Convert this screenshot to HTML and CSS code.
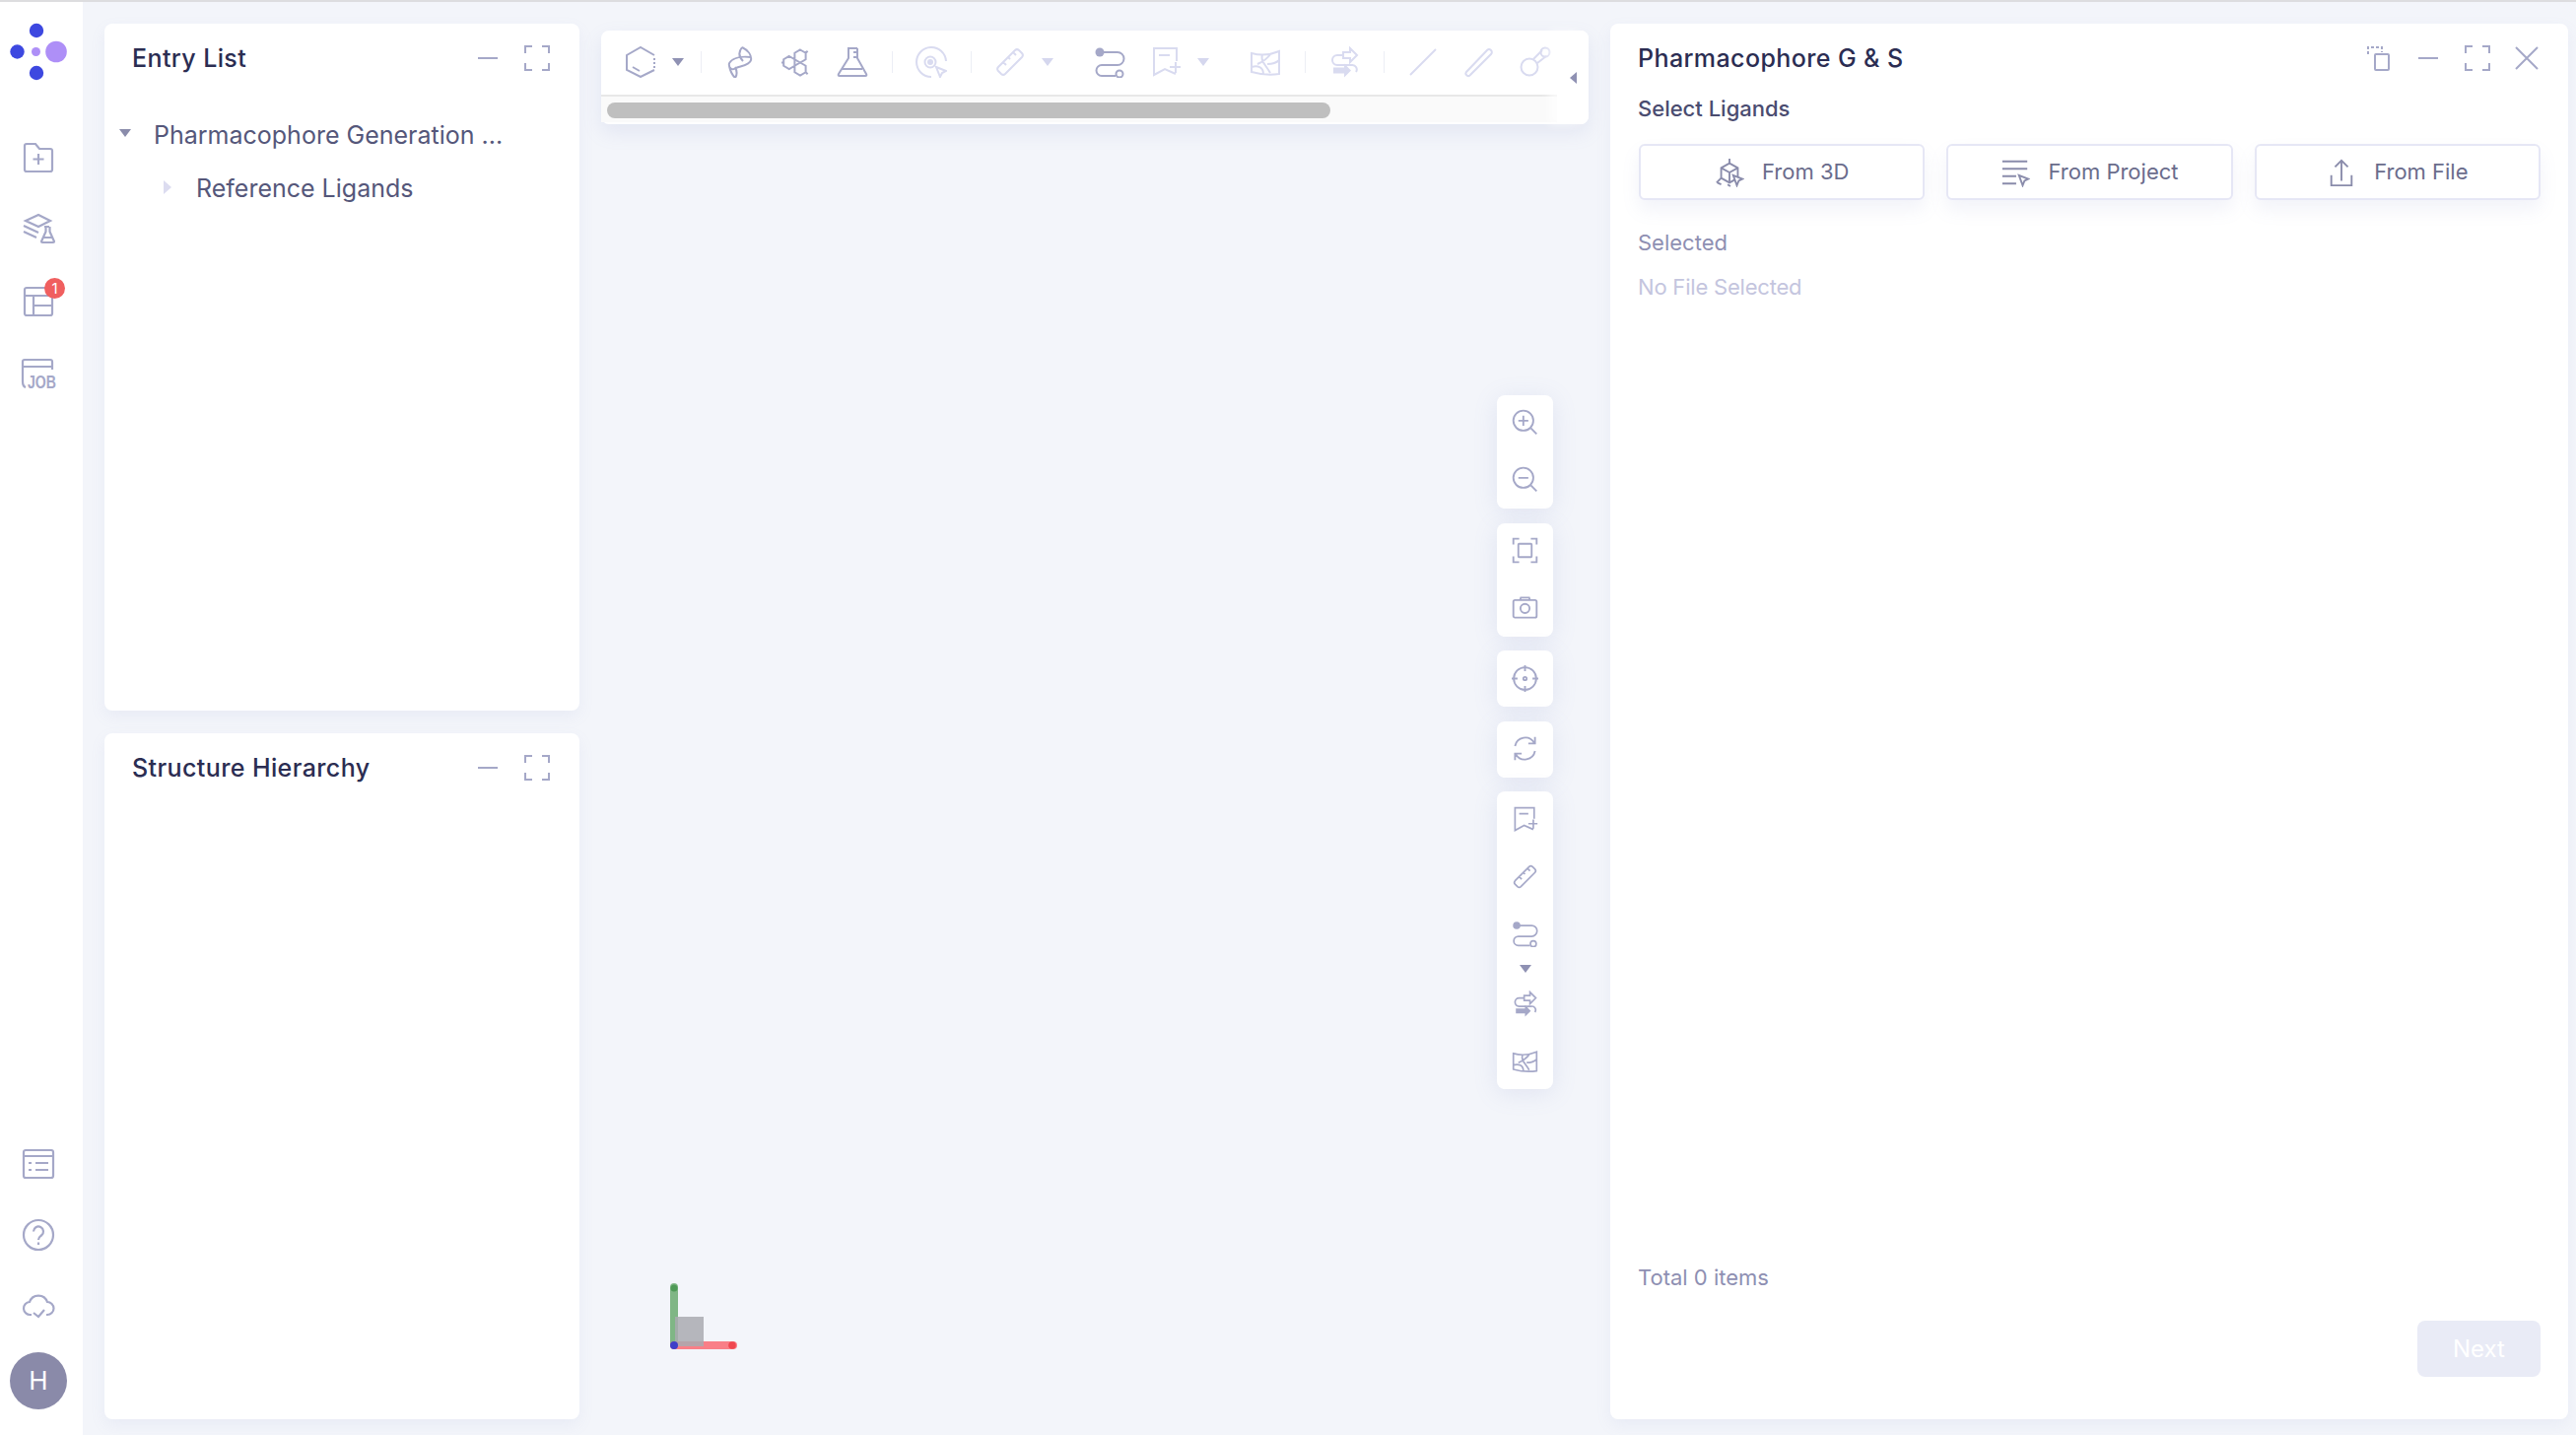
FILE: index.html
```html
<!DOCTYPE html>
<html lang="en">
<head>
  <meta charset="UTF-8">
  <title>Pharmacophore G &amp; S</title>
  <link rel="stylesheet" href="styles.css">
</head>
<body>
  <!-- shared icons -->
  <svg class="icon-defs" width="0" height="0">
    <defs>
      <symbol id="i-hex" viewBox="0 0 32 32"><path d="M30 9L16 1 2 9v15l14 7 14-7"/><path d="M30 12v2M30 16v2M30 20v2M8 21l7 4"/></symbol>
      <symbol id="i-dna" viewBox="0 0 32 32"><path d="M18 1c-4 5-3 10 1 14M18 1c6 3 10 8 9 13-1 5-10 6-15 8M5 17c4-6 14-7 22-6M5 17c-1 5 3 8 7 5M5 20c1 5 3 9 6 12 2-3 2-7 0-11"/></symbol>
      <symbol id="i-rings" viewBox="0 0 32 32"><path d="M20 3.5l5.6 3.25v6.5L20 16.500l-5.600-3.250v-6.500zM20 16.500l5.600 3.250v6.500L20 29.500l-5.600-3.250v-6.500zM8.800 10l5.600 3.250v6.500L8.800 23l-5.600-3.250v-6.500zM25.600 6.750l2-2M25.600 26.250l2 2M3.200 16.500H1"/></symbol>
      <symbol id="i-flask" viewBox="0 0 32 32"><path d="M11 2h10M12 2v10L2 28q-1 2 1 2h26q2 0 1-2L21 12V2M6 23h20M17 6h4M17 11h4"/></symbol>
      <symbol id="i-pick" viewBox="0 0 32 32"><path d="M31 15A15 15 0 1 0 16 31"/><circle cx="15" cy="16" r="3" class="solid"/><circle cx="15" cy="16" r="5.500" stroke-width="1"/><path d="M21 21l10 4-4 2-2 4z"/></symbol>
      <symbol id="i-ruler" viewBox="0 0 32 32"><path d="M4 21L21 4a3 3 0 0 1 4 0l3 3a3 3 0 0 1 0 4L11 28a3 3 0 0 1-4 0l-3-3a3 3 0 0 1 0-4zM9 16l3 3M14 11l2 2M19 6l3 3"/></symbol>
      <symbol id="i-path" viewBox="0 0 32 32"><circle cx="6" cy="6" r="4.500" class="solid"/><path d="M6 6h18a6.500 6.500 0 0 1 0 13H8a5.500 5.500 0 0 0 0 11h14"/><circle cx="26" cy="28" r="3.500"/></symbol>
      <symbol id="i-bookmark" viewBox="0 0 32 32"><path d="M27 15V2H4v27l11-6 11 5M9 9h11M20 21h11M26 16v11"/></symbol>
      <symbol id="i-map" viewBox="0 0 32 32"><path d="M2 7q14 4 28-2v23q-14 2-28-2zM13 8c-2 8 3 10 8 19M8 18c5-2 9-4 14-11M2 21c6-2 12 0 12 7M18 18c4 0 8 0 12-4"/></symbol>
      <symbol id="i-swap" viewBox="0 0 32 32"><path d="M15 6h7V2l7 7-7 7v-4h-7zM15 9H9a5 5 0 0 0 0 10h15a4.500 4.500 0 0 1 4 7"/><path class="solid" d="M5 21.500h11v-4l7 7-7 7v-4H5z"/></symbol>
      <symbol id="i-line" viewBox="0 0 32 32"><path d="M3 29L29 3"/></symbol>
      <symbol id="i-stick" viewBox="0 0 32 32"><path d="M3 26L24 4a2.500 2.500 0 0 1 4 4L7 29a2.500 2.500 0 0 1-4-3z"/></symbol>
      <symbol id="i-ball" viewBox="0 0 32 32"><circle cx="10" cy="21" r="8.500"/><circle cx="26" cy="6" r="4.500"/><path d="M14 13l9-9M18 17l9-7"/></symbol>
      <symbol id="i-minus" viewBox="0 0 26 26"><path d="M3 13h20"/></symbol>
      <symbol id="i-expand" viewBox="0 0 26 26"><path d="M1 8V1h7M18 1h7v7M25 18v7h-7M8 25H1v-7"/></symbol>
      <symbol id="i-close" viewBox="0 0 26 26"><path d="M2 2l22 22M24 2L2 24"/></symbol>
      <symbol id="i-copy" viewBox="0 0 26 26"><rect x="9" y="9" width="14" height="16" rx="1"/><path stroke-dasharray="3 2" d="M2 9V2h14v5"/></symbol>
    </defs>
  </svg>

  <div class="app">
    <nav class="sidebar">
      <svg class="logo" viewBox="0 2 84 100" width="84" height="100">
        <circle cx="37" cy="31" r="7.200" fill="#3d48e0"/>
        <circle cx="37" cy="74" r="7.200" fill="#3d48e0"/>
        <circle cx="17.500" cy="52.500" r="7.200" fill="#3d48e0"/>
        <circle cx="36.500" cy="52.500" r="4.500" fill="#ae8ff7"/>
        <circle cx="57" cy="52.500" r="10.800" fill="#ae8ff7"/>
      </svg>
      <div class="nav-group">
        <div class="nav-item">
          <svg class="icon" viewBox="0 0 32 32"><path d="M2 4q0-2 2-2h9l4 5h11q2 0 2 2v19q0 2-2 2H4q-2 0-2-2zM16 12v11M10.500 17.500h11"/></svg>
        </div>
        <div class="nav-item">
          <svg class="icon" viewBox="0 0 32 32"><path d="M3 7l13-6 12 6-12 6zM1 12l15 7M1 18l13 6M22 13h5M23.500 13v5L19 28q0 1 1 1h11q1 0 1-1l-4.500-10v-5M21 24h9"/></svg>
        </div>
        <div class="nav-item">
          <svg class="icon" viewBox="0 0 32 32"><rect x="2" y="2" width="28" height="28" rx="2"/><path d="M2 10h28M11 10v20M11 20h19"/></svg>
          <span class="badge">1</span>
        </div>
        <div class="nav-item">
          <svg class="icon icon-job" viewBox="0 0 36 32"><path d="M2 24V4q0-2 2-2h26q2 0 2 2v8M2 9h30M2 24q0 5 3 6"/><text x="7" y="31" textLength="29" lengthAdjust="spacingAndGlyphs" class="job-text">JOB</text></svg>
        </div>
      </div>
      <div class="nav-group nav-bottom">
        <div class="nav-item">
          <svg class="icon" viewBox="0 0 32 32"><rect x="1" y="2" width="30" height="28" rx="2"/><path d="M1 8h30M6 15h3M13 15h13M6 22h3M13 22h13"/></svg>
        </div>
        <div class="nav-item">
          <svg class="icon" viewBox="0 0 32 32"><circle cx="16" cy="16" r="15"/><path d="M11 12.500a5 5 0 1 1 8 4c-2 1.500-3 2-3 4.500M16 23.500v2.500"/></svg>
        </div>
        <div class="nav-item">
          <svg class="icon" viewBox="0 0 32 32"><path d="M9 25H8a6.500 6.500 0 0 1-1-13 9.500 9.500 0 0 1 18 0 6.500 6.500 0 0 1 0 13h-1M11 23l5 4 6-7"/></svg>
        </div>
        <div class="avatar">H</div>
      </div>
    </nav>

    <main class="workspace">
      <div class="left-col">
        <section class="panel">
          <header class="panel-head">
            <h2 class="panel-title">Entry List</h2>
            <div class="panel-actions">
              <svg class="head-icon"><use href="#i-minus"/></svg>
              <svg class="head-icon"><use href="#i-expand"/></svg>
            </div>
          </header>
          <ul class="tree">
            <li class="tree-row"><span class="arrow-down"></span>Pharmacophore Generation ...</li>
            <li class="tree-row tree-child"><span class="arrow-right"></span>Reference Ligands</li>
          </ul>
        </section>
        <section class="panel">
          <header class="panel-head">
            <h2 class="panel-title">Structure Hierarchy</h2>
            <div class="panel-actions">
              <svg class="head-icon"><use href="#i-minus"/></svg>
              <svg class="head-icon"><use href="#i-expand"/></svg>
            </div>
          </header>
        </section>
      </div>

      <div class="viewer">
        <div class="toolbar">
          <div class="toolbar-scroll">
            <div class="toolbar-row">
              <div class="tool-group">
                <svg class="tool"><use href="#i-hex"/></svg>
                <span class="caret"></span>
              </div>
              <span class="sep"></span>
              <div class="tool-group">
                <svg class="tool"><use href="#i-dna"/></svg>
                <svg class="tool"><use href="#i-rings"/></svg>
                <svg class="tool"><use href="#i-flask"/></svg>
              </div>
              <span class="sep"></span>
              <svg class="tool off"><use href="#i-pick"/></svg>
              <span class="sep"></span>
              <div class="tool-group">
                <svg class="tool off"><use href="#i-ruler"/></svg>
                <span class="caret off"></span>
                <svg class="tool"><use href="#i-path"/></svg>
                <svg class="tool off"><use href="#i-bookmark"/></svg>
                <span class="caret off"></span>
                <svg class="tool off"><use href="#i-map"/></svg>
              </div>
              <span class="sep"></span>
              <svg class="tool off"><use href="#i-swap"/></svg>
              <span class="sep"></span>
              <div class="tool-group">
                <svg class="tool off"><use href="#i-line"/></svg>
                <svg class="tool off"><use href="#i-stick"/></svg>
                <svg class="tool off"><use href="#i-ball"/></svg>
              </div>
            </div>
            <div class="scroll-track"><div class="scroll-thumb"></div></div>
          </div>
          <div class="toolbar-toggle"><span class="arrow-left"></span></div>
        </div>

        <div class="side-tools">
          <div class="tool-card">
            <div class="card-item"><svg class="card-icon" viewBox="0 0 32 32"><circle cx="14" cy="14" r="12"/><path d="M23 23l7 7M14 8v12M8 14h12"/></svg></div>
            <div class="card-item"><svg class="card-icon" viewBox="0 0 32 32"><circle cx="14" cy="14" r="12"/><path d="M23 23l7 7M8 14h12"/></svg></div>
          </div>
          <div class="tool-card">
            <div class="card-item"><svg class="card-icon" viewBox="0 0 32 32"><path d="M2 9V2h7M23 2h7v7M30 23v7h-7M9 30H2v-7"/><rect x="8" y="8" width="16" height="16" rx="1"/></svg></div>
            <div class="card-item"><svg class="card-icon" viewBox="0 0 32 32"><rect x="2" y="7" width="28" height="21" rx="2"/><circle cx="16" cy="17" r="5.500"/><path d="M10 7l1-3h10l1 3"/></svg></div>
          </div>
          <div class="tool-card">
            <div class="card-item"><svg class="card-icon" viewBox="0 0 32 32"><circle cx="16" cy="16" r="13.500"/><circle cx="16" cy="16" r="2"/><path d="M16 0v7M16 25v7M0 16h7M25 16h7"/></svg></div>
          </div>
          <div class="tool-card">
            <div class="card-item"><svg class="card-icon" viewBox="0 0 32 32"><path d="M4 13a12.500 12.500 0 0 1 23-4M28 19a12.500 12.500 0 0 1-23 4M28 2v8h-8M4 30v-8h8"/></svg></div>
          </div>
          <div class="tool-card">
            <div class="card-item"><svg class="card-icon"><use href="#i-bookmark"/></svg></div>
            <div class="card-item"><svg class="card-icon"><use href="#i-ruler"/></svg></div>
            <div class="card-item"><svg class="card-icon"><use href="#i-path"/></svg></div>
            <div class="card-caret"><span class="caret-plain"></span></div>
            <div class="card-item"><svg class="card-icon"><use href="#i-swap"/></svg></div>
            <div class="card-item"><svg class="card-icon"><use href="#i-map"/></svg></div>
          </div>
        </div>

        <svg class="axes" viewBox="0 0 84 76" width="84" height="76">
          <rect x="15" y="4" width="8" height="66" rx="4" fill="#7fb685"/>
          <rect x="15" y="63" width="68" height="8" rx="4" fill="#f97f87"/>
          <rect x="20" y="38" width="29" height="30" fill="#a9aab0" opacity=".85"/>
          <circle cx="19" cy="9" r="3.500" fill="#4f9a57"/>
          <circle cx="78" cy="67" r="3.800" fill="#f0474f"/>
          <circle cx="19" cy="67" r="4" fill="#3f3fc8"/>
        </svg>
      </div>

      <section class="panel panel-main">
        <header class="panel-head">
          <h2 class="panel-title">Pharmacophore G &amp; S</h2>
          <div class="panel-actions">
            <svg class="head-icon"><use href="#i-copy"/></svg>
            <svg class="head-icon"><use href="#i-minus"/></svg>
            <svg class="head-icon"><use href="#i-expand"/></svg>
            <svg class="head-icon"><use href="#i-close"/></svg>
          </div>
        </header>
        <h3 class="section-title">Select Ligands</h3>
        <div class="source-buttons">
          <button class="source-btn">
            <svg class="btn-icon" viewBox="0 0 32 32"><path d="M16 1v5M16 6l9 5v11l-9 5-9-5V11zM7 11l9 5 9-5M16 16v11M7 22l-5 5M3 27l4 2M14 29l3 2"/><path d="M20 19l10 4-4 2-2 5z" class="cursor"/></svg>
            From 3D
          </button>
          <button class="source-btn">
            <svg class="btn-icon" viewBox="0 0 32 32"><path d="M2 4h27M2 12h27M2 20h15M2 28h15"/><path d="M20 19l10 4-4 2-2 5z" class="cursor"/></svg>
            From Project
          </button>
          <button class="source-btn">
            <svg class="btn-icon" viewBox="0 0 32 32"><path d="M16 25V3M9 10l7-7 7 7M5 19v11h22V19"/></svg>
            From File
          </button>
        </div>
        <div class="selected-label">Selected</div>
        <div class="empty-label">No File Selected</div>
        <div class="panel-foot">
          <div class="total-label">Total 0 items</div>
          <div class="foot-actions"><button class="next-btn" disabled>Next</button></div>
        </div>
      </section>
    </main>
  </div>
</body>
</html>
```

FILE: styles.css
```css
* {
  box-sizing: border-box;
}

body {
  margin: 0;
  font-family: Inter, "Noto Sans", sans-serif;
  background: #f3f5fa;
}

.icon-defs {
  position: absolute;
}

symbol path, symbol circle, symbol rect {
  fill: none;
  stroke: currentColor;
  stroke-width: 2;
}

symbol .solid {
  fill: currentColor;
  stroke: none;
}

.app {
  display: flex;
  height: 1456px;
  border-top: 2px solid #dddddf;
  overflow: hidden;
}

/* left nav */
.sidebar {
  width: 84px;
  flex: none;
  background: #fff;
  display: flex;
  flex-direction: column;
  padding-bottom: 26px;
}

.logo {
  display: block;
}

.nav-group {
  margin-top: 21px;
}

.nav-bottom {
  margin-top: auto;
}

.nav-item {
  position: relative;
  height: 73px;
  padding-right: 6px;
  display: flex;
  align-items: center;
  justify-content: center;
}

.nav-bottom .nav-item {
  height: 72px;
}

.icon {
  width: 32px;
  height: 32px;
  fill: none;
  stroke: #a5a8c8;
  stroke-width: 2.2;
  overflow: visible;
}

.icon-job {
  width: 36px;
}

.job-text {
  font-family: "Liberation Sans", sans-serif;
  font-size: 18px;
  font-weight: 700;
  fill: #a5a8c8;
  stroke: none;
}

.badge {
  position: absolute;
  top: 13px;
  left: 45px;
  width: 21px;
  height: 21px;
  border-radius: 50%;
  background: #f05f5f;
  color: #fff;
  font-size: 15px;
  line-height: 21px;
  text-align: center;
}

.avatar {
  width: 58px;
  height: 58px;
  margin: 11px 0 0 10px;
  border-radius: 50%;
  background: #8a8aa9;
  color: #fff;
  font-size: 26px;
  line-height: 58px;
  text-align: center;
}

/* three columns */
.workspace {
  flex: 1;
  display: grid;
  grid-template-columns: 482px 1002px 972px;
  gap: 22px;
  padding: 22px 8px 16px 22px;
  min-width: 0;
}

.left-col {
  display: flex;
  flex-direction: column;
  gap: 23px;
}

.panel {
  flex: 1;
  background: #fff;
  border-radius: 8px;
  box-shadow: 0 6px 16px rgba(130, 140, 200, 0.09);
}

.panel-head {
  height: 70px;
  padding: 0 30px 0 28px;
  display: flex;
  align-items: center;
  justify-content: space-between;
}

.panel-title {
  margin: 0;
  font-size: 25px;
  font-weight: 500;
  letter-spacing: 0.4px;
  color: #2b2d52;
}

.panel-actions {
  display: flex;
  gap: 24px;
}

.head-icon {
  width: 26px;
  height: 26px;
  color: #a5a8c8;
  display: block;
}

.tree {
  list-style: none;
  margin: 16px 0 0;
  padding: 0;
}

.tree-row {
  height: 54px;
  padding-left: 15px;
  display: flex;
  align-items: center;
  font-size: 25px;
  color: #55577a;
}

.tree-child {
  padding-left: 60px;
}

.arrow-down {
  width: 0;
  height: 0;
  margin-right: 23px;
  margin-top: -4px;
  border-left: 6px solid transparent;
  border-right: 6px solid transparent;
  border-top: 8px solid #8a8cab;
}

.arrow-right {
  width: 0;
  height: 0;
  margin-right: 25px;
  margin-top: -2px;
  border-top: 7px solid transparent;
  border-bottom: 7px solid transparent;
  border-left: 8px solid #dcdcf0;
}

/* 3d viewer column */
.viewer {
  position: relative;
  padding-top: 7px;
}

.toolbar {
  display: flex;
  height: 95px;
  border-radius: 8px;
  background: #fff;
  box-shadow: 0 8px 20px rgba(130, 140, 200, 0.14);
}

.toolbar-scroll {
  flex: 1;
  min-width: 0;
}

.toolbar-row {
  height: 65px;
  padding: 0 0 2px 24px;
  display: flex;
  align-items: center;
  gap: 24px;
}

.tool-group {
  display: flex;
  align-items: center;
  gap: 25px;
}

.tool {
  width: 32px;
  height: 32px;
  flex: none;
  color: #a5a8c8;
}

.tool.off {
  color: #d9dbf0;
}

.caret {
  width: 0;
  height: 0;
  margin-left: -9px;
  margin-right: 16px;
  border-left: 6px solid transparent;
  border-right: 6px solid transparent;
  border-top: 8px solid #8f91b3;
}

.caret.off {
  border-top-color: #d5d7ee;
}

.tool-group .caret:last-child {
  margin-right: -7px;
}

.sep {
  width: 1px;
  height: 22px;
  margin-right: -1px;
  background: #eceef5;
}

.scroll-track {
  height: 28px;
  padding: 6px;
  background: #fafafa;
  border-top: 2px solid #e8e8e8;
}

.scroll-thumb {
  width: 734px;
  height: 16px;
  border-radius: 8px;
  background: #bfbfbf;
}

.toolbar-toggle {
  width: 32px;
  display: flex;
  align-items: center;
  justify-content: center;
  background: #fff;
  border-radius: 0 8px 8px 0;
  box-shadow: -8px 0 10px rgba(255, 255, 255, 0.7);
}

.arrow-left {
  width: 0;
  height: 0;
  border-top: 6px solid transparent;
  border-bottom: 6px solid transparent;
  border-right: 7px solid #8f91b3;
}

.side-tools {
  position: absolute;
  top: 377px;
  right: 36px;
  width: 57px;
  display: flex;
  flex-direction: column;
  gap: 14.500px;
}

.tool-card {
  background: #fff;
  border-radius: 8px;
  box-shadow: 0 4px 24px rgba(130, 140, 200, 0.16);
}

.tool-card:first-child {
  padding-bottom: 1px;
}

.card-item {
  height: 58px;
  display: flex;
  align-items: center;
  justify-content: center;
}

.card-item:first-child {
  margin-top: -1px;
}

.tool-card:first-child .card-item:first-child {
  margin-top: -2px;
}

.card-icon {
  width: 27px;
  height: 27px;
  fill: none;
  stroke: #a5a8c8;
  stroke-width: 2.2;
  color: #a5a8c8;
}

.card-caret {
  height: 13px;
  display: flex;
  align-items: center;
  justify-content: center;
}

.caret-plain {
  border-left: 6px solid transparent;
  border-right: 6px solid transparent;
  border-top: 8px solid #8f91b3;
}

.axes {
  position: absolute;
  left: 55px;
  top: 1274px;
}

/* right panel */
.panel-main {
  display: flex;
  flex-direction: column;
  padding: 0 0 43px;
}

.panel-main .panel-head {
  padding-right: 29px;
}

.section-title {
  margin: 0 28px;
  font-size: 22px;
  line-height: 32px;
  font-weight: 500;
  color: #4a4c70;
}

.source-buttons {
  display: grid;
  grid-template-columns: repeat(3, 1fr);
  gap: 22px;
  margin: 20px 28px 0 29px;
}

.source-btn {
  height: 57px;
  padding-bottom: 3px;
  display: flex;
  align-items: center;
  justify-content: center;
  gap: 18px;
  font: inherit;
  font-size: 22px;
  color: #6a6c8c;
  background: #fff;
  border: 2px solid #e6e7f5;
  border-radius: 6px;
  box-shadow: 0 10px 18px rgba(130, 140, 200, 0.1);
}

.btn-icon {
  width: 30px;
  height: 30px;
  margin-top: 3px;
  fill: none;
  stroke: #8a8cab;
  stroke-width: 2;
}

.btn-icon .cursor {
  fill: #fff;
}

.selected-label {
  margin: 28px 28px 0;
  font-size: 22px;
  line-height: 30px;
  color: #8e8fb2;
}

.empty-label {
  margin: 15px 28px 0;
  font-size: 22px;
  letter-spacing: -0.2px;
  line-height: 30px;
  color: #c4c5de;
}

.panel-foot {
  margin: auto 28px 0;
}

.total-label {
  font-size: 22px;
  line-height: 30px;
  color: #8e8fb2;
}

.foot-actions {
  display: flex;
  justify-content: flex-end;
  margin-top: 29px;
}

.next-btn {
  width: 125px;
  height: 57px;
  font: inherit;
  font-size: 24px;
  color: #fff;
  background: #e9ebf6;
  border: none;
  border-radius: 8px;
}
```
